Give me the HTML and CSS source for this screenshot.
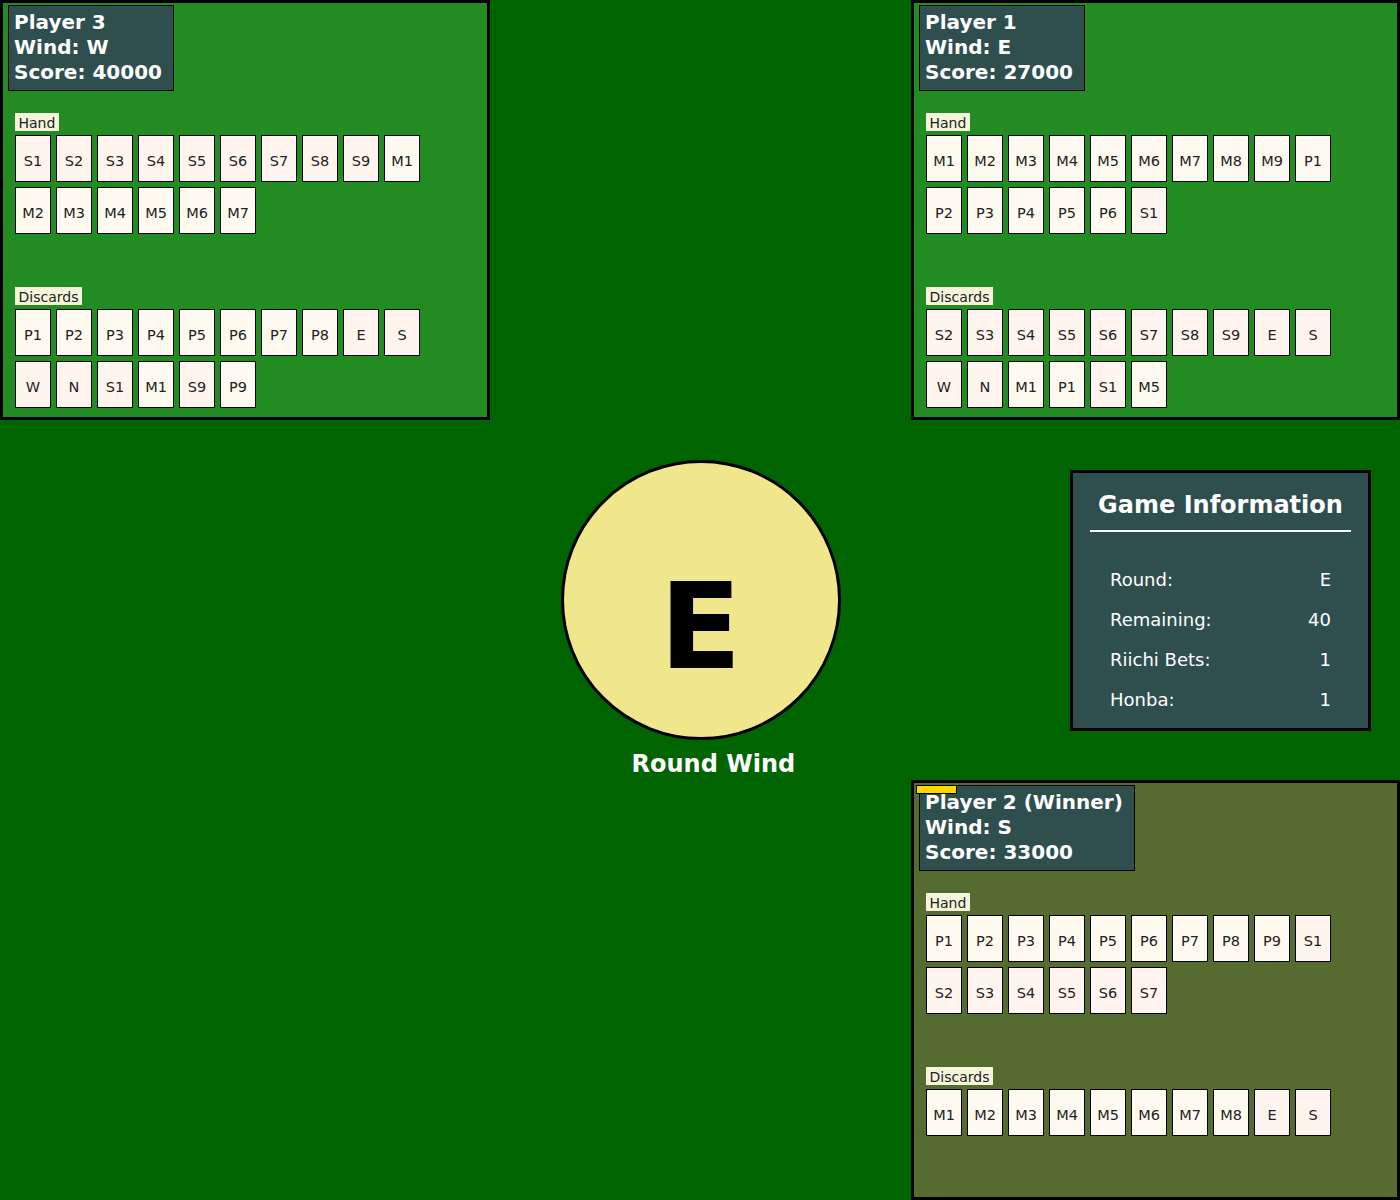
FILE: index.html
```html
<!DOCTYPE html>
<html lang="en">
<head>
<meta charset="utf-8">
<title>Mahjong Table</title>
<link rel="stylesheet" href="styles.css">
</head>
<body>
<div class="table">
  <section class="player p3">
    <div class="player-head">Player 3<br>Wind: W<br>Score: 40000</div>
    <div class="group">
      <div class="group-label">Hand</div>
      <div class="tiles hand">
        <div class="tile sou">S1</div><div class="tile sou">S2</div><div class="tile sou">S3</div><div class="tile sou">S4</div><div class="tile sou">S5</div><div class="tile sou">S6</div><div class="tile sou">S7</div><div class="tile sou">S8</div><div class="tile sou">S9</div><div class="tile">M1</div>
        <div class="tile">M2</div><div class="tile">M3</div><div class="tile">M4</div><div class="tile">M5</div><div class="tile">M6</div><div class="tile">M7</div>
      </div>
    </div>
    <div class="group">
      <div class="group-label">Discards</div>
      <div class="tiles">
        <div class="tile">P1</div><div class="tile">P2</div><div class="tile">P3</div><div class="tile">P4</div><div class="tile">P5</div><div class="tile">P6</div><div class="tile">P7</div><div class="tile">P8</div><div class="tile sou">E</div><div class="tile sou">S</div>
        <div class="tile sou">W</div><div class="tile sou">N</div><div class="tile sou">S1</div><div class="tile">M1</div><div class="tile sou">S9</div><div class="tile">P9</div>
      </div>
    </div>
  </section>

  <div class="spacer-top"></div>

  <section class="player p1">
    <div class="player-head">Player 1<br>Wind: E<br>Score: 27000</div>
    <div class="group">
      <div class="group-label">Hand</div>
      <div class="tiles hand">
        <div class="tile">M1</div><div class="tile">M2</div><div class="tile">M3</div><div class="tile">M4</div><div class="tile">M5</div><div class="tile">M6</div><div class="tile">M7</div><div class="tile">M8</div><div class="tile">M9</div><div class="tile">P1</div>
        <div class="tile">P2</div><div class="tile">P3</div><div class="tile">P4</div><div class="tile">P5</div><div class="tile">P6</div><div class="tile sou">S1</div>
      </div>
    </div>
    <div class="group">
      <div class="group-label">Discards</div>
      <div class="tiles">
        <div class="tile sou">S2</div><div class="tile sou">S3</div><div class="tile sou">S4</div><div class="tile sou">S5</div><div class="tile sou">S6</div><div class="tile sou">S7</div><div class="tile sou">S8</div><div class="tile sou">S9</div><div class="tile sou">E</div><div class="tile sou">S</div>
        <div class="tile sou">W</div><div class="tile sou">N</div><div class="tile">M1</div><div class="tile">P1</div><div class="tile sou">S1</div><div class="tile">M5</div>
      </div>
    </div>
  </section>

  <div class="spacer-mid"></div>

  <div class="center-cell">
    <div class="wind-circle">
      <span class="wind-letter">E</span>
      <span class="wind-caption">Round Wind</span>
    </div>
  </div>

  <div class="info-cell">
    <div class="info">
      <h2 class="info-title">Game Information</h2>
      <div class="info-rows">
        <div class="info-row"><span>Round:</span><span>E</span></div>
        <div class="info-row"><span>Remaining:</span><span>40</span></div>
        <div class="info-row"><span>Riichi Bets:</span><span>1</span></div>
        <div class="info-row"><span>Honba:</span><span>1</span></div>
      </div>
    </div>
  </div>

  <div class="spacer-bl"></div>
  <div class="spacer-bm"></div>

  <section class="player p2 winner">
    <div class="winner-mark"></div>
    <div class="player-head">Player 2 (Winner)<br>Wind: S<br>Score: 33000</div>
    <div class="group">
      <div class="group-label">Hand</div>
      <div class="tiles hand">
        <div class="tile">P1</div><div class="tile">P2</div><div class="tile">P3</div><div class="tile">P4</div><div class="tile">P5</div><div class="tile">P6</div><div class="tile">P7</div><div class="tile">P8</div><div class="tile">P9</div><div class="tile sou">S1</div>
        <div class="tile sou">S2</div><div class="tile sou">S3</div><div class="tile sou">S4</div><div class="tile sou">S5</div><div class="tile sou">S6</div><div class="tile sou">S7</div>
      </div>
    </div>
    <div class="group">
      <div class="group-label">Discards</div>
      <div class="tiles">
        <div class="tile">M1</div><div class="tile">M2</div><div class="tile">M3</div><div class="tile">M4</div><div class="tile">M5</div><div class="tile">M6</div><div class="tile">M7</div><div class="tile">M8</div><div class="tile sou">E</div><div class="tile sou">S</div>
      </div>
    </div>
  </section>
</div>
</body>
</html>
```

FILE: styles.css
```css
html, body {
  margin: 0;
  padding: 0;
}

body {
  background: #006400;
  font-family: "DejaVu Sans", "Liberation Sans", sans-serif;
  width: 1400px;
  height: 1200px;
  overflow: hidden;
}

.table {
  display: grid;
  grid-template-columns: 490px 421px 489px;
  grid-template-rows: 420px 360px 420px;
  width: 1400px;
  height: 1200px;
}

.player {
  position: relative;
  box-sizing: border-box;
  background: #228B22;
  border: 3px solid #000;
  padding: 2px 5px 0 5px;
  overflow: hidden;
}

.player.winner {
  background: #556B2F;
}

.winner-mark {
  position: absolute;
  top: 2px;
  left: 2px;
  width: 41px;
  height: 9px;
  box-sizing: border-box;
  background: #FFD700;
  border: 1px solid #000;
}

.player-head {
  width: fit-content;
  background: #2F4F4F;
  border: 1px solid #000;
  color: #fff;
  font-weight: bold;
  font-size: 20px;
  line-height: 25px;
  padding: 4px 11px 5px 5px;
  white-space: nowrap;
}

.group {
  margin-left: 7px;
}

.player-head + .group {
  margin-top: 22px;
}

.group-label {
  width: fit-content;
  background: #F5F5DC;
  color: #222;
  font-size: 14px;
  line-height: 16px;
  padding: 2px 3.5px 0 3.5px;
  margin-bottom: 4px;
}

.tiles {
  display: grid;
  grid-template-columns: repeat(10, 36px);
  grid-auto-rows: 47px;
  gap: 5px;
}

.tiles.hand {
  min-height: 152px;
  align-content: start;
}

.tile {
  box-sizing: border-box;
  border: 1px solid #000;
  background: #FFFAF0;
  color: #222;
  font-size: 14.5px;
  display: flex;
  align-items: center;
  justify-content: center;
  padding-top: 5px;
}

.tile.sou {
  background: #FFF5EE;
}

.center-cell {
  display: flex;
  align-items: center;
  justify-content: center;
}

.wind-circle {
  position: relative;
  box-sizing: border-box;
  width: 280px;
  height: 280px;
  border: 3px solid #000;
  border-radius: 50%;
  background: #F0E68C;
  text-align: center;
}

.wind-letter {
  display: block;
  margin-top: 104px;
  font-size: 120px;
  line-height: 120px;
  font-weight: bold;
  color: #000;
}

.wind-caption {
  position: absolute;
  top: 287px;
  left: 68px;
  white-space: nowrap;
  color: #fff;
  font-weight: bold;
  font-size: 24px;
}

.info-cell {
  display: flex;
  align-items: center;
  justify-content: flex-end;
  padding-right: 29px;
}

.info {
  box-sizing: border-box;
  width: 301px;
  background: #2F4F4F;
  border: 3px solid #000;
  color: #fff;
  padding: 0 17px 8px;
}

.info-title {
  margin: 0;
  padding: 18px 0 11px;
  border-bottom: 2px solid #fff;
  text-align: center;
  font-size: 24px;
  font-weight: bold;
  line-height: normal;
}

.info-rows {
  margin-top: 28px;
}

.info-row {
  display: flex;
  justify-content: space-between;
  padding: 10px 20px;
  font-size: 18px;
  line-height: 20px;
}
```
